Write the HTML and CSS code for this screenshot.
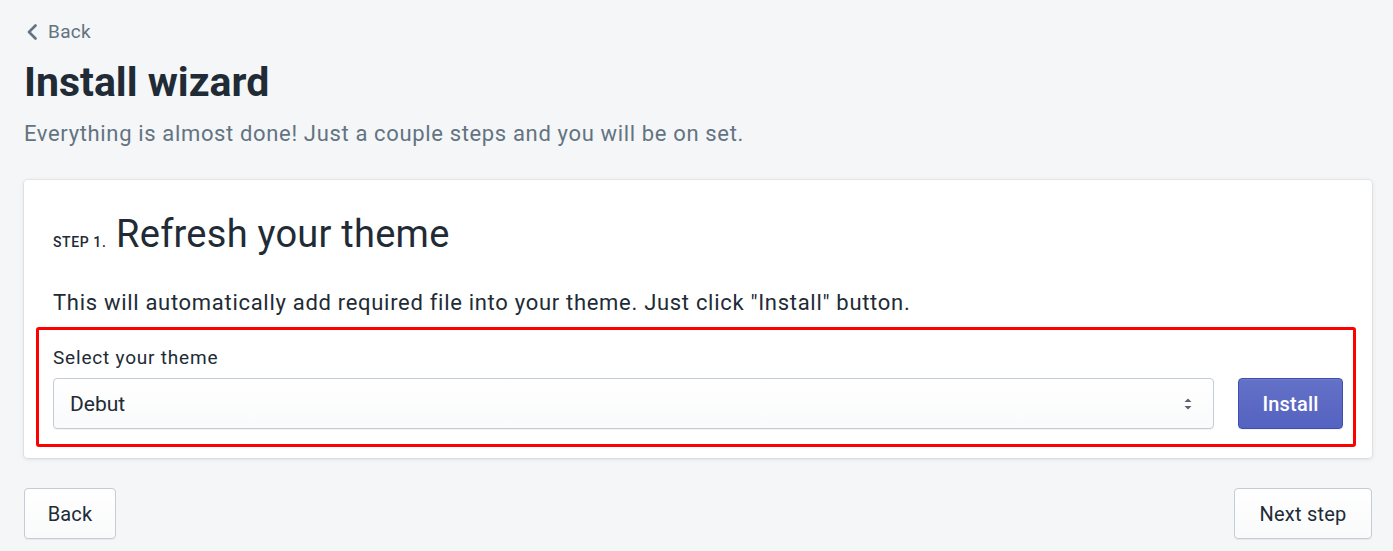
FILE: index.html
```html
<!DOCTYPE html>
<html lang="en">
<head>
<meta charset="utf-8">
<title>Install wizard</title>
<link rel="stylesheet" href="styles.css">
</head>
<body>
<div class="page">
  <a class="breadcrumb" href="#">
    <svg class="chev" viewBox="0 0 12 16" width="12" height="16"><path d="M9.5 1.5 L3 8 L9.5 14.5" fill="none" stroke="currentColor" stroke-width="2.6" stroke-linecap="round" stroke-linejoin="round"/></svg>
    <span>Back</span>
  </a>
  <h1 class="title">Install wizard</h1>
  <p class="subtitle">Everything is almost done! Just a couple steps and you will be on set.</p>

  <div class="card">
    <h2 class="step-heading"><span class="step-num">STEP 1.</span> Refresh your theme</h2>
    <p class="step-text">This will automatically add required file into your theme. Just click "Install" button.</p>
    <div class="highlight">
      <label class="field-label">Select your theme</label>
      <div class="field-row">
        <div class="select">
          <span>Debut</span>
          <svg class="arrows" viewBox="0 0 10 16" width="10" height="16"><path d="M1.5 6 L5 2.5 L8.5 6 Z M1.5 10 L5 13.5 L8.5 10 Z" fill="#5c6270"/></svg>
        </div>
        <button class="btn btn-primary">Install</button>
      </div>
    </div>
  </div>

  <div class="footer">
    <button class="btn">Back</button>
    <button class="btn">Next step</button>
  </div>
</div>
</body>
</html>
```
FILE: styles.css
```css
* { box-sizing: border-box; }
html, body { margin: 0; padding: 0; }
body {
  background: #f4f6f8;
  font-family: Roboto, "Noto Sans", sans-serif;
  color: #212b36;
  width: 1393px;
  height: 551px;
  overflow: hidden;
}
.page {
  padding: 18px 21px 0 24px;
}
.breadcrumb {
  display: flex;
  align-items: center;
  gap: 10px;
  color: #637381;
  text-decoration: none;
  font-size: 19px;
  line-height: 28px;
  height: 28px;
  margin-left: 2px;
  letter-spacing: 0.3px;
}
.chev { display: block; }
.title {
  margin: 9px 0 0;
  font-size: 41px;
  font-weight: 700;
  line-height: 54px;
}
.subtitle {
  margin: 10px 0 0;
  font-size: 22px;
  letter-spacing: 0.65px;
  line-height: 30px;
  color: #637381;
}
.card {
  margin-top: 31px;
  background: #fff;
  border-radius: 4px;
  box-shadow: 0 0 0 1px rgba(63,63,68,0.06), 0 1px 4px 0 rgba(63,63,68,0.15);
  padding: 29px 29px 11px;
}
.step-heading {
  margin: 0;
  font-size: 38px;
  letter-spacing: 0.25px;
  font-weight: 400;
  line-height: 50px;
  color: #212b36;
}
.step-num {
  font-size: 14px;
  font-weight: 500;
  letter-spacing: 0.6px;
}
.step-text {
  margin: 22px 0 0;
  font-size: 22px;
  letter-spacing: 0.7px;
  line-height: 28px;
  color: #212b36;
}
.highlight {
  margin: 10px -13px 0 -17px;
  border: 3px solid #ff0000;
  border-radius: 3px;
  padding: 15px 10px 15px 14px;
}
.field-label {
  display: block;
  font-size: 19px;
  letter-spacing: 0.8px;
  line-height: 26px;
  color: #212b36;
}
.field-row {
  display: flex;
  gap: 24px;
  margin-top: 7px;
}
.select {
  flex: 1;
  height: 51px;
  border: 1px solid #c4cdd5;
  border-radius: 4px;
  background: linear-gradient(#fff, #f9fafb);
  box-shadow: 0 1px 0 rgba(22,29,37,0.05);
  display: flex;
  align-items: center;
  justify-content: space-between;
  padding: 0 20px 0 16px;
  font-size: 21px;
  color: #212b36;
}
.btn {
  height: 51px;
  padding: 0 23px;
  border: 1px solid #c4cdd5;
  border-radius: 4px;
  background: linear-gradient(#fff, #f9fafb);
  box-shadow: 0 1px 0 rgba(22,29,37,0.05);
  font-family: inherit;
  font-size: 20px;
  letter-spacing: 0.2px;
  color: #212b36;
}
.btn-primary {
  width: 105px;
  padding: 0;
  background: linear-gradient(#6371c7, #5563c1);
  border-color: #3f4eae;
  color: #fff;
  font-weight: 500;
  box-shadow: inset 0 1px 0 0 #6f7bcb, 0 1px 0 0 rgba(22,29,37,0.05);
}
.footer {
  display: flex;
  justify-content: space-between;
  margin-top: 30px;
}
.footer .btn:first-child { width: 92px; padding: 0; }
.footer .btn:last-child { width: 138px; padding: 0; }
```
